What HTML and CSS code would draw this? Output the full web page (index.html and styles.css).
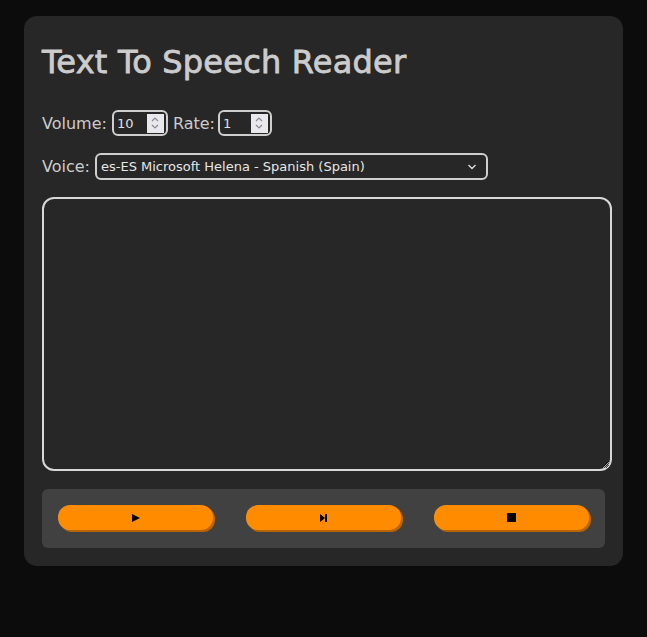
FILE: index.html
```html
<!DOCTYPE html>
<html>
<head>
<meta charset="utf-8">
<link rel="stylesheet" href="styles.css">
</head>
<body>
<div class="card">
  <h1 class="title">Text To Speech Reader</h1>
  <div class="row">
    <label class="label">Volume:</label>
    <span class="numbox">
      <input class="num" type="number" value="10" min="0" max="10">
      <span class="spin"><svg width="14" height="16" viewBox="0 0 14 16"><path d="M4 6 L7 3 L10 6 M4 10 L7 13 L10 10" fill="none" stroke="#8a8a90" stroke-width="1.2"/></svg></span>
    </span>
    <label class="label">Rate:</label>
    <span class="numbox numbox-rate">
      <input class="num" type="number" value="1" min="0" max="10">
      <span class="spin"><svg width="14" height="16" viewBox="0 0 14 16"><path d="M4 6 L7 3 L10 6 M4 10 L7 13 L10 10" fill="none" stroke="#8a8a90" stroke-width="1.2"/></svg></span>
    </span>
  </div>
  <div class="row row-voice">
    <label class="label">Voice:</label>
    <span class="selbox">
      <select class="voice">
        <option>es-ES Microsoft Helena - Spanish (Spain)</option>
      </select>
      <svg class="chev" width="10" height="6" viewBox="0 0 10 6"><path d="M1.5 1 L5 4.5 L8.5 1" fill="none" stroke="#e0e0e0" stroke-width="1.3"/></svg>
    </span>
  </div>
  <textarea class="text"></textarea>
  <div class="controls">
    <button class="btn"><svg width="8" height="8" viewBox="0 0 8 8"><path d="M0 0 L8 4 L0 8 Z" fill="#000"/></svg></button>
    <button class="btn"><svg width="7" height="8" viewBox="0 0 7 8"><path d="M0 0 L5 4 L0 8 Z" fill="#000"/><rect x="5" y="0" width="2" height="8" fill="#000"/></svg></button>
    <button class="btn"><svg width="9" height="9" viewBox="0 0 9 9"><rect x="0" y="0" width="9" height="9" fill="#000"/></svg></button>
  </div>
</div>
</body>
</html>
```
FILE: styles.css
```css
html, body {
  margin: 0;
  padding: 0;
  background: #0c0c0c;
  height: 100%;
}
body {
  font-family: "DejaVu Sans", sans-serif;
  color: #cfcfcf;
  padding: 16px 24px;
  box-sizing: border-box;
}
.card {
  width: 599px;
  background: #272727;
  border-radius: 13px;
  padding: 18px;
  box-sizing: border-box;
}
.title {
  font-size: 32px;
  font-weight: normal;
  margin: 8px 0 28px;
  color: #cccccc;
  line-height: 40px;
  letter-spacing: 0.2px;
  -webkit-text-stroke: 0.8px #cccccc;
}
.row {
  display: flex;
  align-items: center;
  gap: 5px;
  margin-bottom: 17px;
}
.row-voice {
  margin-bottom: 17px;
}
.label {
  font-size: 16px;
  color: #cccccc;
}
.numbox {
  display: flex;
  align-items: center;
  width: 56px;
  height: 26px;
  box-sizing: border-box;
  border: 2px solid #cfcfcf;
  border-radius: 6px;
  padding: 0 2px 0 3px;
}
.numbox-rate {
  width: 54px;
  margin-left: -2px;
}
.num {
  flex: 1;
  min-width: 0;
  height: 100%;
  border: none;
  outline: none;
  background: transparent;
  color: #e0e0e0;
  font-family: "DejaVu Sans", sans-serif;
  font-size: 13px;
  padding: 0;
  -moz-appearance: textfield;
}
.num::-webkit-inner-spin-button,
.num::-webkit-outer-spin-button {
  -webkit-appearance: none;
  margin: 0;
}
.spin {
  display: flex;
  align-items: center;
  justify-content: center;
  width: 17px;
  height: 19px;
  background: #e9e9ed;
}
.selbox {
  display: flex;
  align-items: center;
  width: 393px;
  height: 27px;
  box-sizing: border-box;
  border: 2px solid #cfcfcf;
  border-radius: 6px;
  padding: 0 9px 0 4px;
}
.voice {
  flex: 1;
  min-width: 0;
  height: 100%;
  appearance: none;
  -webkit-appearance: none;
  border: none;
  outline: none;
  background: transparent;
  color: #e6e6e6;
  font-family: "DejaVu Sans", sans-serif;
  font-size: 13px;
  padding: 0;
}
.chev {
  flex: none;
}
.text {
  display: block;
  width: 570px;
  height: 274px;
  box-sizing: border-box;
  background: #272727;
  border: 2px solid #d8d8d8;
  border-radius: 12px;
  margin: 0 0 18px;
  color: #ddd;
  resize: vertical;
  color-scheme: dark;
}
.controls {
  display: flex;
  gap: 33px;
  background: #414141;
  border-radius: 6px;
  padding: 16px 16px 17px;
  height: 59px;
  box-sizing: border-box;
}
.btn {
  flex: 1;
  height: 25px;
  border: none;
  border-radius: 12px;
  background: #ff8c00;
  box-shadow: 2px 2px 0 #b86400;
  padding: 0;
  display: flex;
  align-items: center;
  justify-content: center;
}
```
